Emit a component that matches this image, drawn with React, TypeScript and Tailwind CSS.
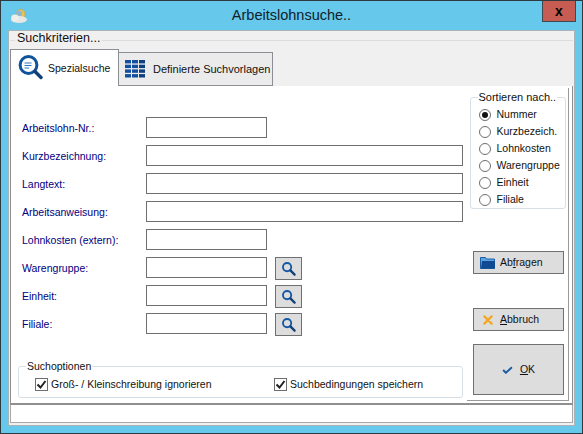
import React from "react";

const font = { fontFamily: '"Liberation Sans", Arial, sans-serif' };

function Mag({ size = 16 }: { size?: number }) {
  return (
    <svg width={size} height={size} viewBox="0 0 16 16" fill="none">
      <circle cx="6.5" cy="6.5" r="4.4" stroke="#1558a6" strokeWidth="2" />
      <path d="M10 10l4.5 4.5" stroke="#123f78" strokeWidth="2.4" strokeLinecap="round" />
    </svg>
  );
}

function BigMag() {
  return (
    <svg width="25" height="28" viewBox="0 0 25 28" fill="none">
      <circle cx="10.5" cy="12" r="8.4" fill="#fff" stroke="#10529c" strokeWidth="3" />
      <path d="M6.5 10h7M6.5 12.5h7M6.5 15h4.5" stroke="#2e74c0" strokeWidth="1.1" />
      <path d="M17 18.5l6 6" stroke="#123f78" strokeWidth="3.4" strokeLinecap="round" />
    </svg>
  );
}

function GridIcon() {
  const rows = [0, 1, 2, 3];
  const cols = [0, 1, 2];
  return (
    <svg width="20" height="18" viewBox="0 0 20 18">
      {rows.map((r) =>
        cols.map((c) => (
          <rect key={`${r}-${c}`} x={c * 7} y={r * 4.7} width="6" height="3.4" fill={c === 2 ? "#0f3f80" : "#134f9e"} />
        ))
      )}
    </svg>
  );
}

function Logo() {
  return (
    <svg width="18" height="16" viewBox="0 0 18 16">
      <circle cx="10.5" cy="6" r="4.6" fill="#e8c35a" stroke="#c9a43c" strokeDasharray="1.5 1" />
      <circle cx="9" cy="5.5" r="3" fill="#8fb7cf" />
      <ellipse cx="9" cy="11.5" rx="8" ry="3.6" fill="#e6e6e2" />
      <ellipse cx="5" cy="9.8" rx="3.8" ry="3.2" fill="#eeeeea" />
    </svg>
  );
}

function Field({ label, wide, search }: { label: string; wide?: boolean; search?: boolean }) {
  return (
    <div className="flex h-[21px] items-center">
      <span className="w-[124px] shrink-0 pt-[2px] text-[10.5px] text-[#000080]">{label}</span>
      <div className={`h-[21px] border border-[#6f6f6f] bg-white ${wide ? "w-[317px]" : "w-[121px]"}`} />
      {search && (
        <button className="ml-2 mt-[2px] flex h-[23px] w-[27px] items-center justify-center border border-[#707070] bg-[#dddddd]">
          <Mag size={15} />
        </button>
      )}
    </div>
  );
}

function Radio({ label, on }: { label: string; on?: boolean }) {
  return (
    <div className="flex h-[17px] items-center gap-[6px] text-[10.5px] text-[#111]">
      <span className="flex h-[12px] w-[12px] items-center justify-center rounded-full border border-[#6e6e6e] bg-white">
        {on && <span className="h-[6px] w-[6px] rounded-full bg-[#111]" />}
      </span>
      {label}
    </div>
  );
}

function Check({ label, className }: { label: string; className?: string }) {
  return (
    <div className={`flex items-center gap-[3px] text-[10.5px] text-[#111] ${className ?? ""}`}>
      <span className="flex h-[13px] w-[13px] items-center justify-center border border-[#6e6e6e] bg-white">
        <svg width="11" height="11" viewBox="0 0 11 11" fill="none">
          <path d="M1.5 5.5l3 3 5-6.5" stroke="#222" strokeWidth="2" />
        </svg>
      </span>
      {label}
    </div>
  );
}

function ActionButton({ children, className }: { children: React.ReactNode; className?: string }) {
  return (
    <button className={`ml-[2px] flex w-[91px] items-center border border-[#707070] bg-[#dddddd] text-[10.5px] text-[#111] ${className ?? ""}`}>
      {children}
    </button>
  );
}

export default function App() {
  return (
    <div style={font} className="flex h-[434px] w-[583px] flex-col overflow-hidden border border-[#2e3a40] bg-[#66c9eb]">
      {/* title bar */}
      <div className="relative flex h-[29px] shrink-0 items-center justify-center text-[14.5px] text-[#10222c]">
        <span className="absolute left-[9px] top-[7px]">
          <Logo />
        </span>
        <span>Arbeitslohnsuche..</span>
        <span className="absolute right-[6px] top-[-1px] flex h-[22px] w-[34px] items-center justify-center border border-[#3f4a50] bg-[#c75c52] text-[14px] font-bold text-black">
          x
        </span>
      </div>

      {/* client area */}
      <div className="mx-[7px] flex h-[396px] flex-col border border-[#a8b4ba] bg-[#f0f0f0] px-[1px]">
        <div className="relative mt-[9px] flex h-[46px] shrink-0 flex-col border-t border-[#dcdcdc] bg-[#f0f0f0]">
          <span className="absolute left-[5px] top-[-10px] bg-[#f0f0f0] px-[2px] text-[12.5px] leading-[15px] text-[#111]">
            Suchkriterien...
          </span>
          <div className="mt-[8px] flex h-[37px] items-end">
            <div className="relative z-10 flex h-[37px] w-[109px] items-start gap-[5px] border border-b-0 border-[#8b8f94] bg-white pl-[7px] pt-[3px] text-[10.5px] text-[#111]">
              <BigMag />
              <span className="mt-[8px]">Spezialsuche</span>
            </div>
            <div className="flex h-[34px] w-[154px] items-center gap-[8px] border border-l-0 border-[#8b8f94] bg-[#ebebeb] pl-[6px] text-[11px] text-[#111]">
              <GridIcon />
              <span>Definierte Suchvorlagen</span>
            </div>
          </div>
        </div>

        {/* tab panel */}
        <div className="flex h-[319px] shrink-0 border-b-2 border-l border-r border-[#8f8f8f] bg-white">
          <div className="relative flex w-[456px] shrink-0 flex-col pl-[11px] pt-[31px]">
            <div className="flex flex-col gap-[7px]">
              <Field label="Arbeitslohn-Nr.:" />
              <Field label="Kurzbezeichnung:" wide />
              <Field label="Langtext:" wide />
              <Field label="Arbeitsanweisung:" wide />
              <Field label="Lohnkosten (extern):" />
              <Field label="Warengruppe:" search />
              <Field label="Einheit:" search />
              <Field label="Filiale:" search />
            </div>
            <div className="relative ml-[-4px] mt-[32px] flex h-[32px] w-[445px] items-center rounded-[3px] border border-[#d5e0e8] pl-[16px] pt-[5px]">
              <span className="absolute left-[7px] top-[-8px] bg-white px-[1px] text-[10.5px] leading-[14px] text-[#111]">
                Suchoptionen
              </span>
              <Check label="Groß- / Kleinschreibung ignorieren" className="w-[239px]" />
              <Check label="Suchbedingungen speichern" />
            </div>
          </div>

          <div className="mb-[2px] mr-[3px] mt-[2px] flex flex-1 flex-col items-center border-b border-r border-[#9a9a9a] pt-[9px]">
            <div className="relative h-[112px] w-[96px] rounded-[3px] border border-[#d5e0e8] pl-[8px] pt-[8px]">
              <span className="absolute left-[7px] top-[-8px] bg-white px-[1px] text-[11px] leading-[14px] text-[#111]">
                Sortieren nach..
              </span>
              <Radio label="Nummer" on />
              <Radio label="Kurzbezeich." />
              <Radio label="Lohnkosten" />
              <Radio label="Warengruppe" />
              <Radio label="Einheit" />
              <Radio label="Filiale" />
            </div>
            <ActionButton className="mt-[42px] h-[23px] pl-[6px]">
              <svg width="15" height="13" viewBox="0 0 15 13" className="mr-[5px]">
                <path d="M0.5 1.5h5l1 1.5h8v9.5h-14z" fill="#5aa5e0" stroke="#1b5ea6" />
                <path d="M2 5h13v7.5H1z" fill="#0f4a92" />
              </svg>
              <span>
                Ab<span className="underline">f</span>ragen
              </span>
            </ActionButton>
            <ActionButton className="mt-[34px] h-[23px] pl-[9px]">
              <svg width="10" height="10" viewBox="0 0 11 11" className="mr-[7px]">
                <path d="M1.5 1.5l8 8M9.5 1.5l-8 8" stroke="#f5a623" strokeWidth="2.4" strokeLinecap="round" />
              </svg>
              <span>
                <span className="underline">A</span>bbruch
              </span>
            </ActionButton>
            <ActionButton className="mt-[13px] h-[51px] justify-center gap-[7px]">
              <svg width="11" height="8" viewBox="0 0 13 10" fill="none">
                <path d="M1 5l3.5 3.5L12 1.5" stroke="#1b5ea6" strokeWidth="2.4" />
              </svg>
              <span>
                <span className="underline">O</span>K
              </span>
            </ActionButton>
          </div>
        </div>

        {/* status strip */}
        <div className="mb-[2px] h-[18px] shrink-0 border-b border-l border-r border-[#a8a8a8] bg-white" />
      </div>
    </div>
  );
}
